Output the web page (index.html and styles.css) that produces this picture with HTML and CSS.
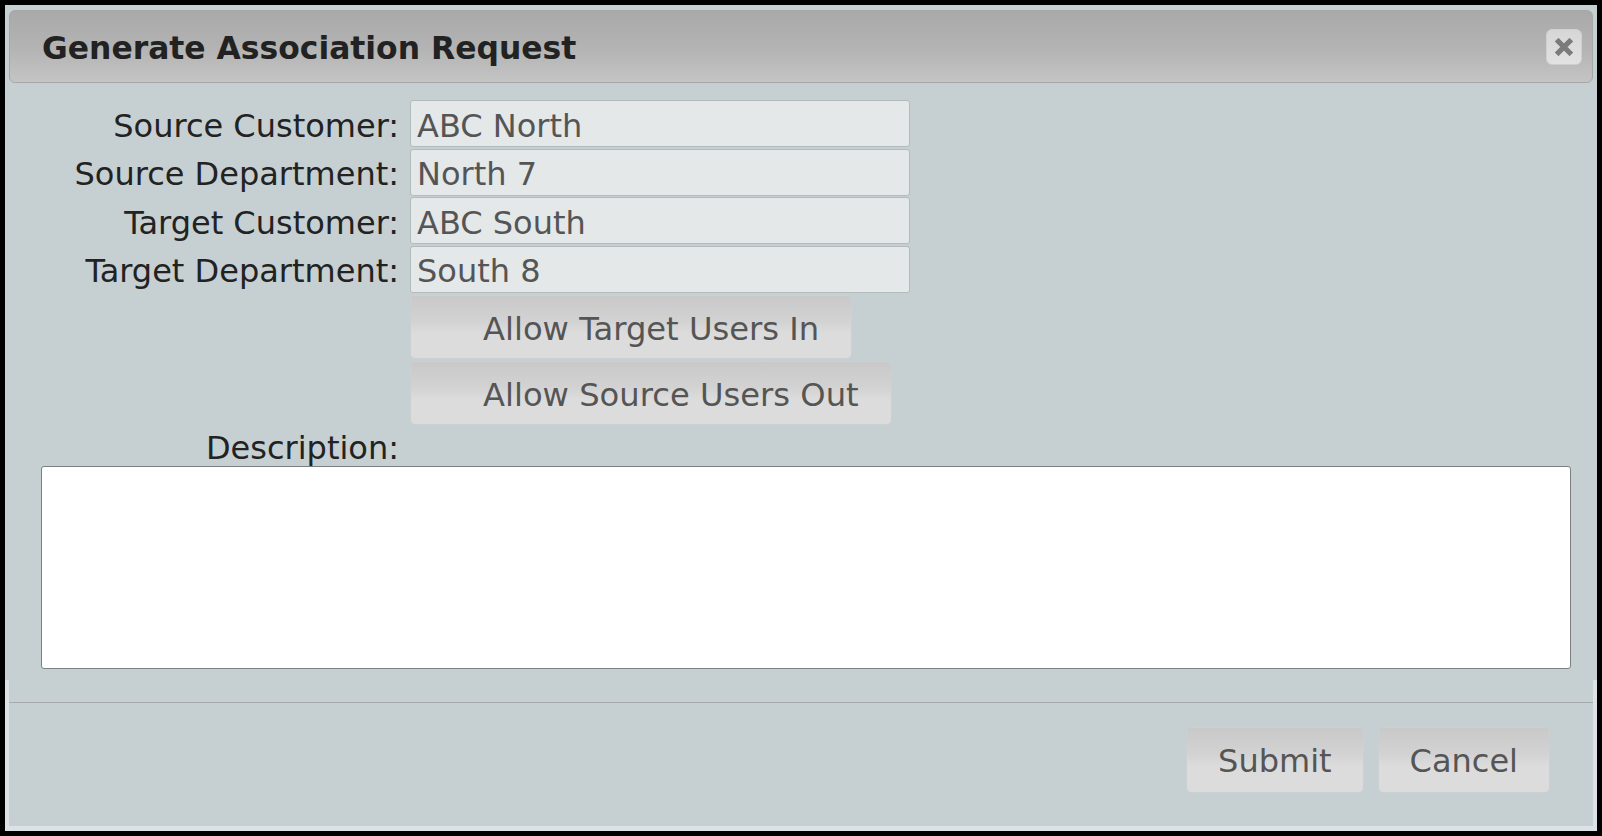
FILE: index.html
```html
<!DOCTYPE html>
<html>
<head>
<meta charset="utf-8">
<link rel="stylesheet" href="styles.css">
</head>
<body>
<div class="dialog">
  <div class="inner">
    <div class="titlebar">
      <span class="title">Generate Association Request</span>
      <button class="close" aria-label="close">
        <svg width="18" height="18" viewBox="0 0 18 18"><path d="M3.5 3.5L14.5 14.5M14.5 3.5L3.5 14.5" stroke="#7b7b7b" stroke-width="5.2" stroke-linecap="square"/></svg>
      </button>
    </div>
    <div class="content">
      <div class="form">
        <label class="lbl">Source Customer:</label>
        <input class="field" type="text" value="ABC North" readonly>
        <label class="lbl">Source Department:</label>
        <input class="field" type="text" value="North 7" readonly>
        <label class="lbl">Target Customer:</label>
        <input class="field" type="text" value="ABC South" readonly>
        <label class="lbl">Target Department:</label>
        <input class="field" type="text" value="South 8" readonly>
        <span></span>
        <div class="toggles">
          <button class="btn toggle">Allow Target Users In</button>
          <button class="btn toggle">Allow Source Users Out</button>
        </div>
        <label class="lbl desc">Description:</label>
        <span></span>
      </div>
      <textarea class="descbox"></textarea>
    </div>
    <div class="footer">
      <button class="btn act">Submit</button>
      <button class="btn act">Cancel</button>
    </div>
  </div>
</div>
</body>
</html>
```
FILE: styles.css
```css
html, body {
  margin: 0;
  padding: 0;
  background: #000;
}
body {
  font-family: "DejaVu Sans", Verdana, sans-serif;
  padding: 5px;
  height: 836px;
  box-sizing: border-box;
}
.dialog {
  height: 826px;
  box-sizing: border-box;
  padding: 0 4px 5px 4px;
  background: linear-gradient(to bottom, #c6cfd1 0, #c6cfd1 675px, #dce2e5 675px);
}
.inner {
  height: 100%;
  background: #c6cfd1;
  display: flex;
  flex-direction: column;
}
.titlebar {
  flex: none;
  margin-top: 5px;
  height: 73px;
  box-sizing: border-box;
  border: 1px solid #a6a8a8;
  border-radius: 6px;
  background: linear-gradient(to bottom, #a9a9a9 0%, #b3b3b3 50%, #c4c4c4 100%);
  display: flex;
  align-items: center;
  justify-content: space-between;
  padding: 0 10px 0 32px;
}
.title {
  font-weight: bold;
  font-size: 31.4px;
  color: #222;
  position: relative;
  top: 1px;
}
.close {
  width: 36px;
  height: 36px;
  padding: 0;
  border: 1px solid #cfcfcf;
  border-radius: 6px;
  background: linear-gradient(to bottom, #d6d6d6, #e2e2e2);
  display: flex;
  align-items: center;
  justify-content: center;
}
.content {
  flex: none;
  padding-top: 17px;
}
.form {
  display: grid;
  grid-template-columns: 390px 500px;
  column-gap: 11px;
  row-gap: 1.5px;
  align-items: baseline;
}
.lbl {
  text-align: right;
  font-size: 32px;
  color: #222;
  white-space: nowrap;
}
.field {
  height: 47px;
  box-sizing: border-box;
  border: 1px solid #b4bbbd;
  border-radius: 3px;
  background: #e4e8e9;
  font-family: "DejaVu Sans", Verdana, sans-serif;
  font-size: 32px;
  color: #555;
  padding: 4px 6px 0 6px;
  margin: 0;
  outline: none;
}
.toggles {
  align-self: start;
  display: flex;
  flex-direction: column;
  align-items: flex-start;
  gap: 2px;
  padding-top: 1px;
}
.btn {
  font-family: "DejaVu Sans", Verdana, sans-serif;
  font-size: 32px;
  color: #555;
  border: 1px solid #cdd0d1;
  border-radius: 5px;
  background: linear-gradient(to bottom, #c9c9c9 0%, #d2d2d2 40%, #dcdcdc 60%, #dcdcdc 100%);
  margin: 0;
  box-sizing: border-box;
  cursor: pointer;
}
.toggle {
  font-size: 32.2px;
  height: 64px;
  padding: 3px 32px 0 72px;
}
.desc {
  margin-top: 2px;
  line-height: 37px;
  position: relative;
  top: 1px;
}
.descbox {
  display: block;
  margin: 0 0 0 32px;
  width: 1530px;
  height: 203px;
  box-sizing: border-box;
  border: 1px solid #7d8081;
  border-radius: 3px;
  background: #fff;
  resize: none;
  outline: none;
}
.footer {
  flex: none;
  margin-top: 33px;
  border-top: 1px solid #a6aaab;
  display: flex;
  justify-content: flex-end;
  gap: 14px;
  padding: 24px 43px 0 0;
}
.act {
  height: 66px;
  padding: 3px 31px 0 31px;
}
```
